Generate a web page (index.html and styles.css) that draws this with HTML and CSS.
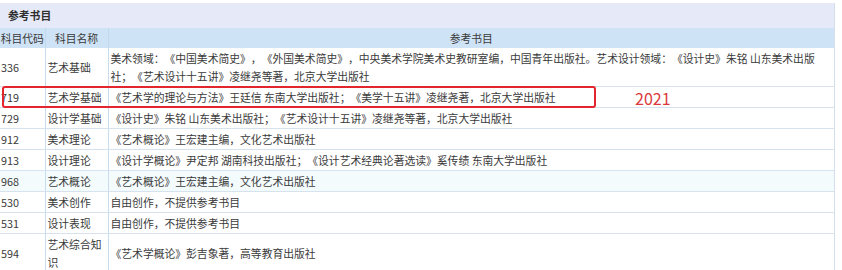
FILE: index.html
```html
<!DOCTYPE html>
<html lang="zh-CN">
<head>
<meta charset="utf-8">
<title>参考书目</title>
<link rel="stylesheet" href="styles.css">
</head>
<body>
<div class="page">
  <div class="panel">
    <div class="panel-title">参考书目</div>
    <table class="books">
      <colgroup>
        <col class="c-code">
        <col class="c-name">
        <col class="c-book">
      </colgroup>
      <thead>
        <tr><th>科目代码</th><th>科目名称</th><th>参考书目</th></tr>
      </thead>
      <tbody>
        <tr><td>336</td><td>艺术基础</td><td>美术领域：《中国美术简史》，《外国美术简史》，中央美术学院美术史教研室编，中国青年出版社。艺术设计领域：《设计史》朱铭 山东美术出版社；《艺术设计十五讲》凌继尧等著，北京大学出版社</td></tr>
        <tr><td>719</td><td>艺术学基础</td><td>《艺术学的理论与方法》王廷信 东南大学出版社；《美学十五讲》凌继尧著，北京大学出版社</td></tr>
        <tr><td>729</td><td>设计学基础</td><td>《设计史》朱铭 山东美术出版社；《艺术设计十五讲》凌继尧等著，北京大学出版社</td></tr>
        <tr><td>912</td><td>美术理论</td><td>《艺术概论》王宏建主编，文化艺术出版社</td></tr>
        <tr><td>913</td><td>设计理论</td><td>《设计学概论》尹定邦 湖南科技出版社；《设计艺术经典论著选读》奚传绩 东南大学出版社</td></tr>
        <tr class="tint"><td>968</td><td>艺术概论</td><td>《艺术概论》王宏建主编，文化艺术出版社</td></tr>
        <tr><td>530</td><td>美术创作</td><td>自由创作，不提供参考书目</td></tr>
        <tr><td>531</td><td>设计表现</td><td>自由创作，不提供参考书目</td></tr>
        <tr><td>594</td><td>艺术综合知识</td><td>《艺术学概论》彭吉象著，高等教育出版社</td></tr>
      </tbody>
    </table>
  </div>
  <div class="mark-box"></div>
  <div class="mark-year">2021</div>
</div>
</body>
</html>
```
FILE: styles.css
```css
html, body {
  margin: 0;
  padding: 0;
  background: #ffffff;
}
body {
  font-family: "Noto Sans CJK SC", "Microsoft YaHei", "Noto Sans", sans-serif;
  font-size: 10.8px;
  color: #3a3a3a;
  text-spacing-trim: space-all;
}
.page {
  position: relative;
  width: 842px;
  height: 270px;
  overflow: hidden;
}
.panel {
  margin-top: 3px;
  width: 835px;
  border-right: 1px solid #d3dfeb;
  box-sizing: border-box;
}
.panel-title {
  height: 25px;
  line-height: 25px;
  padding-left: 8px;
  background: #e6e9f8;
  font-weight: bold;
  color: #2f2f2f;
}
.books {
  width: 100%;
  border-collapse: collapse;
  table-layout: fixed;
}
.c-code { width: 45px; }
.c-name { width: 63px; }
.books th {
  height: 20px;
  padding: 0;
  background: #cfe3f6;
  font-weight: normal;
  line-height: 20px;
  text-align: center;
  color: #3a3a3a;
  border-left: 1px solid #c2d8ee;
}
.books th:first-child,
.books td:first-child {
  border-left: none;
}
.books td {
  padding: 1px 2px 1px 2px;
  line-height: 18px;
  vertical-align: middle;
  text-align: left;
  border-left: 1px solid #c8dcef;
  border-bottom: 1px solid #d6e3ef;
  word-break: break-all;
}
.books td:first-child {
  padding-left: 1px;
}
.books td:last-child {
  padding-right: 12px;
}
.books tr.tint td {
  background: #f4fbfd;
}
.mark-box {
  position: absolute;
  left: 2px;
  top: 86px;
  width: 594px;
  height: 22px;
  box-sizing: border-box;
  border: 2px solid #e3262d;
  border-radius: 3px;
}
.mark-year {
  position: absolute;
  left: 635px;
  top: 88px;
  font-family: "Noto Sans CJK SC", "Noto Sans", sans-serif;
  font-size: 16px;
  line-height: 20px;
  color: #db3a3c;
}
```
